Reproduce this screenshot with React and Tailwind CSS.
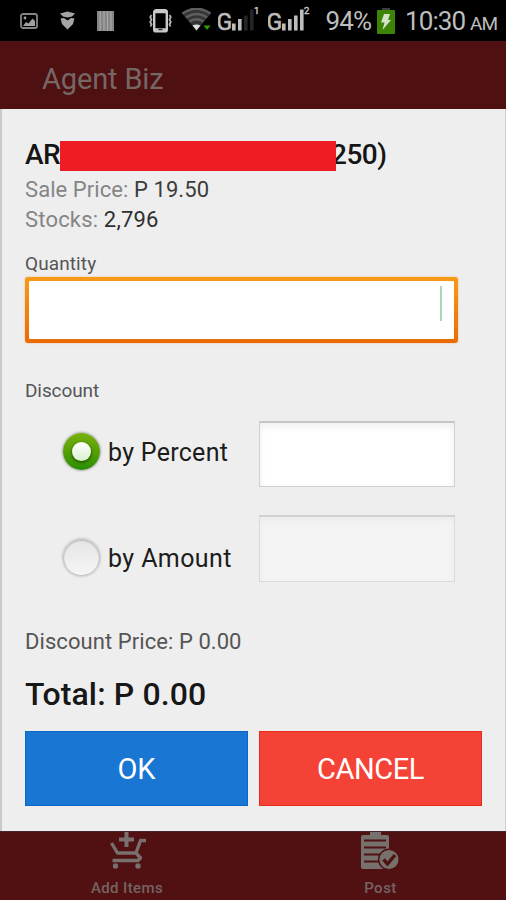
import { useState } from 'react';

const bars = [
  { x: 0, h: 7 },
  { x: 6, h: 11.5 },
  { x: 12, h: 15 },
  { x: 18, h: 21 },
];

function Signal({ level, sim }) {
  return (
    <svg width="44" height="30" viewBox="0 0 44 30">
      <text x="-1.5" y="24.3" fontSize="23" fontFamily="Roboto, sans-serif" fill="#bdbdbd" stroke="#bdbdbd" strokeWidth="0.6">G</text>
      {bars.map((b, i) => (
        <rect key={b.x} x={14 + b.x} y={24.5 - b.h} width="3.6" height={b.h} fill={i < level ? '#bdbdbd' : '#252525'} />
      ))}
      <text x="36" y="8" fontSize="9.5" fontFamily="Roboto, sans-serif" fill="#c8c8c8" stroke="#c8c8c8" strokeWidth="0.4">{sim}</text>
    </svg>
  );
}

function StatusBar() {
  return (
    <div className="flex h-[41px] shrink-0 items-center bg-black text-[#bdbdbd]">
      <svg className="ml-[20px]" width="18" height="16" viewBox="0 0 18 16">
        <rect x="1" y="1" width="16" height="14" rx="2" fill="none" stroke="#858585" strokeWidth="1.8" />
        <circle cx="5" cy="5" r="1.4" fill="#a0a0a0" />
        <path d="M3 13 L6 9 L8.5 10.5 L12.5 5.5 L15 8 V13 Z" fill="#a0a0a0" />
      </svg>
      <svg className="ml-[21px]" width="17" height="19" viewBox="0 0 17 19">
        <path d="M1 2.5 L8.5 0.5 L16 2.5 L13 5.5 L8.5 6.5 L4 5.5 Z" fill="#a5a5a5" />
        <path d="M1.5 7.5 L5 7 L8.5 9.5 L12 7 L15.5 7.5 L14 13 L8.5 18.5 L3 13 Z" fill="#a5a5a5" />
      </svg>
      <svg className="ml-[20.5px]" width="17" height="20" viewBox="0 0 17 20">
        <rect width="17" height="20" fill="#858585" />
        <path d="M3.2 0V20M7 0V20M10.5 0V20M14 0V20" stroke="#a8a8a8" strokeWidth="1.2" />
      </svg>
      <svg className="ml-[34px]" width="25" height="24" viewBox="0 0 25 24" fill="none">
        <rect x="6.2" y="1.2" width="12.6" height="21.2" rx="2" stroke="#c9c9c9" strokeWidth="2.4" />
        <path d="M6 3H19M6 20.5H19" stroke="#c9c9c9" strokeWidth="2.5" />
        <path d="M10.5 20.5H14.5" stroke="#222" strokeWidth="1.2" />
        <path d="M3.5 6L2.2 8.3L3.5 10.6L2.2 13L3.5 15.3L2.5 17.5M21.5 6L22.8 8.3L21.5 10.6L22.8 13L21.5 15.3L22.5 17.5" stroke="#b5b5b5" strokeWidth="1.8" />
      </svg>
      <svg className="mb-[1px] ml-[8px]" width="32" height="24" viewBox="0 0 32 24" fill="none">
        <path d="M1 5.5 Q15.5 -4.5 30 5.5 L15.5 22.5 Z" fill="#353535" />
        <path d="M1.5 5.5 Q15.5 -4 29.5 5.5M5 9.5 Q15.5 2.5 26 9.5M8.5 13.5 Q15.5 9 22.5 13.5" stroke="#5e5e5e" strokeWidth="2.6" />
        <path d="M11.5 17.5 Q15.5 15.5 19.5 17.5 L15.5 22.5 Z" fill="#dedede" />
        <path d="M22.5 17.5H29.5L26 22Z" fill="#2f9a08" />
      </svg>
      <div className="ml-[5px] flex">
        <Signal level={2} sim="1" />
        <div className="ml-[6px]"><Signal level={4} sim="2" /></div>
      </div>
      <span className="ml-[14px] w-[46px] text-[26px] leading-[30px] tracking-[-0.8px] whitespace-nowrap">94%</span>
      <svg className="ml-[5.5px] shrink-0" width="18" height="26" viewBox="0 0 18 26">
        <rect x="5" y="0" width="8" height="3" fill="#3d3d3d" />
        <rect x="0" y="2" width="18" height="24" rx="1" fill="#3c8406" />
        <path d="M7 6H13L11 12H14L5.5 22L7.5 14.5H4Z" fill="#d4e3c8" />
      </svg>
      <span className="ml-[10px] w-[60px] text-[26px] leading-[30px] tracking-[-0.9px] whitespace-nowrap">10:30</span>
      <span className="ml-[5px] pt-[5px] text-[19px] leading-[25px] tracking-[-0.8px]">AM</span>
    </div>
  );
}

function Radio({ checked }) {
  if (checked) {
    return (
      <span className="flex h-[37px] w-[37px] items-center justify-center rounded-full bg-linear-to-b from-[#79b10b] to-[#288d04] shadow-[0_0_3px_rgba(0,0,0,0.55)]">
        <span className="h-[19px] w-[19px] rounded-full bg-linear-to-b from-white to-[#d9f0cd] shadow-[0_1px_2px_1px_rgba(20,80,0,0.65)]" />
      </span>
    );
  }
  return (
    <span className="h-[37px] w-[37px] rounded-full border border-[#c2c2c2] bg-linear-to-b from-[#e5e5e5] to-[#f5f5f5] shadow-[0_0_2px_1px_#c9c9c9,inset_0_1px_1px_#bcbcbc]" />
  );
}

export default function App() {
  const [mode, setMode] = useState('percent');

  return (
    <div className="flex h-[900px] w-[506px] flex-col overflow-hidden bg-[#511112] font-['Roboto',sans-serif]">
      <StatusBar />

      <header className="flex h-[68px] shrink-0 items-center bg-[#4f1012] pt-[8px] pl-[42px]">
        <h1 className="text-[29px] leading-[34px] tracking-[-0.15px] text-[#766765]">Agent Biz</h1>
      </header>

      {/* Dialog */}
      <main className="flex h-[722px] shrink-0 flex-col border-r border-l-2 border-r-[#cfcfcf] border-l-[#c9c9c9] bg-[#eeeeee] pl-[23px]">
        <div className="mt-[30px] flex h-[34px] items-center text-[28px] leading-[34px] font-medium text-[#151515]">
          <span className="mb-[2px] w-[35px] tracking-[-0.6px]">AR</span>
          <span className="z-10 h-[30px] w-[276px] bg-[#ee1c25]" />
          <span className="mb-[2px] ml-[-5px] tracking-[-0.5px]">250)</span>
        </div>
        <p className="mt-[2px] text-[22px] leading-[30px] tracking-[0.07px] text-[#858585]">
          Sale Price: <span className="text-[#3c3c3c]">P 19.50</span>
        </p>
        <p className="text-[22px] leading-[30px] tracking-[0.18px] text-[#858585]">
          Stocks: <span className="text-[#303030]">2,796</span>
        </p>

        <label className="mt-[17px] text-[19px] leading-[24px] tracking-[0.1px] text-[#555]">Quantity</label>
        <div className="mt-[1px] flex h-[66px] w-[433px] rounded-[3px] bg-linear-to-b from-[#f79a18] to-[#e96b05] p-[4px] shadow-[0_0_2px_#f3b071]">
          <div className="flex flex-1 justify-end rounded-[1px] bg-white pt-[5px] pr-[12px]">
            <span className="h-[35px] w-[2px] bg-[#a9d9ad]" />
          </div>
        </div>

        <p className="mt-[36px] text-[19px] leading-[24px] tracking-[-0.1px] text-[#555]">Discount</p>

        <div className="mt-[17px] flex h-[67px] items-center">
          <button className="ml-[38px] flex w-[196px] items-center gap-[8px] pb-[4px]" onClick={() => setMode('percent')}>
            <Radio checked={mode === 'percent'} />
            <span className="pt-[2px] text-[25px] leading-[30px] tracking-[0.28px] whitespace-nowrap text-[#1c1c1c]">by Percent</span>
          </button>
          <div className="mt-[1px] h-[66px] w-[196px] border border-t-2 border-[#d0d0d0] border-t-[#c6c6c6] bg-white shadow-[inset_0_3px_7px_#eeeeee]" />
        </div>
        <div className="mt-[28px] flex h-[67px] items-center">
          <button className="ml-[38px] flex w-[196px] items-center gap-[8px] pt-[17px]" onClick={() => setMode('amount')}>
            <Radio checked={mode === 'amount'} />
            <span className="pt-[4px] text-[25px] leading-[30px] tracking-[0.4px] whitespace-nowrap text-[#1c1c1c]">by Amount</span>
          </button>
          <div className="h-[67px] w-[196px] border border-t-2 border-[#dadada] border-t-[#d2d2d2] bg-[#f4f4f4] shadow-[inset_0_3px_7px_#ebebeb]" />
        </div>

        <p className="mt-[45px] text-[22px] leading-[30px] tracking-[0.07px] text-[#555]">Discount Price: P 0.00</p>
        <p className="mt-[17px] text-[32px] leading-[40px] font-medium tracking-[0.12px] text-[#171717]">Total: P 0.00</p>

        <div className="mt-[17px] flex gap-[11px]">
          <button className="h-[75px] w-[223px] border border-[#0c66c8] bg-[#1976d2] pt-[2px] text-[29px] text-white">OK</button>
          <button className="h-[75px] w-[223px] border border-[#e82a1d] bg-[#f44336] pt-[2px] text-[29px] tracking-[-0.4px] text-white">CANCEL</button>
        </div>
      </main>

      <footer className="flex h-[69px] shrink-0 border-t border-[#42282a] bg-[#511112] text-[15px] leading-[18px] font-medium text-[#746462]">
        <div className="flex w-[254px] flex-col items-center">
          <svg className="ml-[2px]" width="38" height="38" viewBox="0 0 38 38" fill="none" stroke="#77706d" strokeWidth="3.4">
            <path d="M17.5 0V15M10 7.5H25" strokeWidth="4" />
            <path d="M2.5 11L8.5 21H27L31.5 8.5H37M27 21L31.5 26L29 28.5H3.5" strokeLinejoin="round" />
            <circle cx="6.5" cy="34" r="2.7" fill="#77706d" stroke="none" />
            <circle cx="29" cy="34" r="2.7" fill="#77706d" stroke="none" />
          </svg>
          <span className="mt-[9px] ml-[1px] tracking-[0.4px]">Add Items</span>
        </div>
        <div className="flex w-[254px] flex-col items-center">
          <svg width="40" height="38" viewBox="0 0 40 38" fill="none">
            <path d="M2 3H10V0H21V3H27Q29 3 29 5V35Q29 37 27 37H3Q1 37 1 35V5Q1 3 3 3Z" fill="#77716e" />
            <path d="M4 8.5H26M4 15.5H26M4 22.5H22M4 29.5H20" stroke="#511112" strokeWidth="1.8" />
            <circle cx="29" cy="27.5" r="10.3" fill="#77716e" stroke="#511112" strokeWidth="1.5" />
            <path d="M23.5 27.5L27.5 32L35 23" stroke="#511112" strokeWidth="3.4" />
          </svg>
          <span className="mt-[9px] ml-[2px] tracking-[0.5px]">Post</span>
        </div>
      </footer>
    </div>
  );
}
